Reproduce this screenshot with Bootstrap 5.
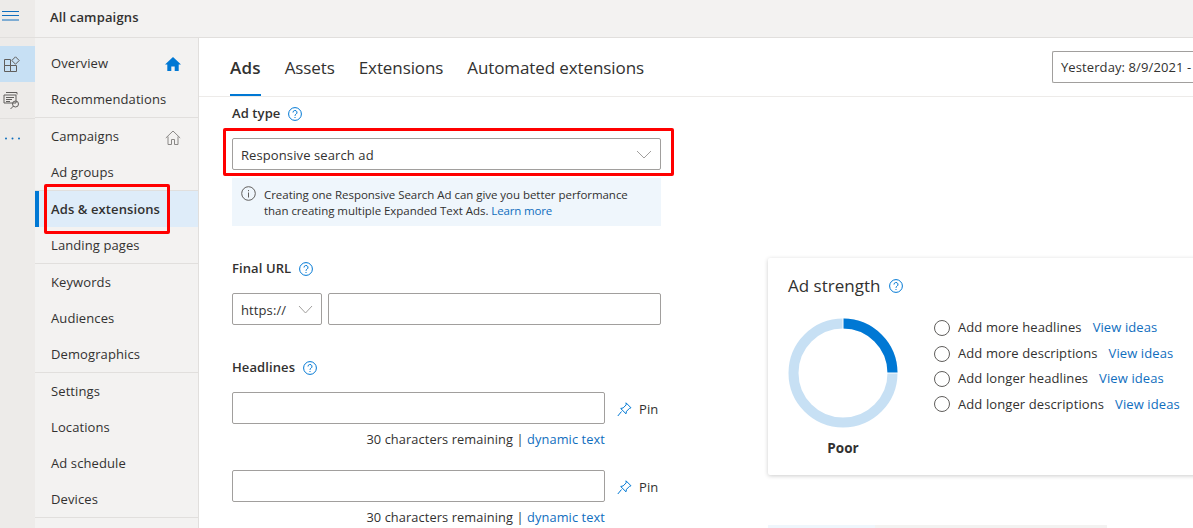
<!DOCTYPE html>
<html lang="en">
<head>
<meta charset="utf-8">
<title>All campaigns</title>
<link href="https://cdn.jsdelivr.net/npm/bootstrap@5.3.0/dist/css/bootstrap.min.css" rel="stylesheet">
<style>
html,body{height:528px;overflow:hidden;background:#fff}
body{position:relative;font-family:"Open Sans","Noto Sans",sans-serif;font-size:13px;color:#323130;letter-spacing:.1px}
a{text-decoration:none;color:#106ebe}
.shell{min-width:0}
.rail{width:35px;height:528px;background:#edebe9;flex:none}
.rail-top{height:38px;border-bottom:1px solid #e1dfdd;padding:11px 0 0 2px;margin-bottom:8px}
.rail-tile{height:36px;display:flex;align-items:center;padding-left:4px}
.rail-tile.on{background:#c7e0f4}
.rail-sep{border-top:1px solid #e1dfdd}
.rail-dots{padding:18px 0 0 4px}
.topstrip{height:38px;background:#f3f2f1;border-bottom:1px solid #e1dfdd;padding:0 15px 2px;display:flex;align-items:center;font-weight:600;font-size:13px;letter-spacing:.15px}
.side{width:164px;flex:none;background:#f3f2f1;border-right:1px solid #e1dfdd;height:490px;padding-top:7px}
.side-group{border-bottom:1px solid #e1dfdd}
.side-item{height:36px;padding:2px 17px 0 16px;display:flex;align-items:center;justify-content:space-between;color:#323130}
.side-item.on{background:#deecf9;box-shadow:inset 4px 0 0 #0078d4;font-weight:600}
.main-pane{height:490px;min-width:0}
.tabs-row{height:59px;border-bottom:1px solid #edebe9;padding-left:31px}
.tab-link{font-size:17px;color:#323130;height:58px;padding-top:2px;display:flex;align-items:center;margin-right:24px;letter-spacing:-.1px}
.tab-link.on{font-weight:600;box-shadow:inset 0 -2px 0 #0078d4;letter-spacing:.2px}
.date-btn{width:141px;height:32px;border:1px solid #a19f9d;border-right:0;border-radius:2px 0 0 2px;padding:2px 0 0 8px;display:flex;align-items:center;white-space:nowrap;margin-top:13px;flex:none}
.form-col{width:429px;margin-left:33px;flex:none}
.field-label{font-weight:600;display:flex;align-items:center;gap:8px;height:20px}
.fake-input{height:32px;border:1px solid #a19f9d;border-radius:2px;background:#fff;display:flex;align-items:center;justify-content:space-between;padding:0 8px}
.fake-input>span{padding-top:3px}
.info-box{background:#eff6fc;height:48px;margin-top:8px;padding:9px 10px 0 9px;display:flex;gap:8px;font-size:11.5px;line-height:16px;letter-spacing:-.04px}
.info-box a{letter-spacing:-.15px}
.info-box svg{margin-top:-1px}
.remain{text-align:right;font-size:12.800px;margin-top:5px;line-height:20px;white-space:nowrap}
.head-row{width:373px}
.pin{color:#323130;position:absolute;left:385px;top:8px;display:flex;gap:7px;align-items:center;white-space:nowrap}
.right-col{margin-left:107px;width:460px;flex:none;padding-top:161px}
.strength{height:217px;box-shadow:0 1px 4px rgba(0,0,0,.2);border-radius:2px;padding:14px 20px;background:#fff}
.strength-title{font-size:17px;display:flex;align-items:center;gap:9px;height:28px;letter-spacing:0}
.tip{display:flex;align-items:center;gap:8px;height:25.4px;white-space:nowrap}
.tip a{margin-left:3px}
.circ{width:16px;height:16px;border:1px solid #605e5c;border-radius:50%;flex:none}
.poor{font-weight:700;font-size:13.500px;text-align:center;width:110px;margin-top:10px}
.strip{height:8px;margin-top:50px;width:339px;background:#f3f2f1}
.strip>div{width:107px;height:8px;background:#eff6fc}
.redbox{position:absolute;border:3px solid #f00;border-radius:2px;pointer-events:none}
.rb-a{left:44px;top:184px;width:126px;height:50px}
.rb-b{left:223px;top:128px;width:451px;height:48px}
</style>
</head>
<body>
<div class="d-flex">
  <div class="rail">
    <div class="rail-top">
      <svg width="18" height="10" viewBox="0 0 18 10" class="d-block"><path d="M0 .5h17M0 4.500h17M0 9h17" stroke="#106ebe" fill="none"/></svg>
    </div>
    <div class="rail-tile on">
      <svg width="16" height="16" viewBox="0 0 16 16" fill="none" stroke="#605e5c"><path d="M.5 3.500h6v6h-6zM.5 9.500h6v6h-6zM6.500 9.500h6v6h-6z"/><path d="M11.500.8l3.700 3.700-3.700 3.700-3.700-3.700z"/></svg>
    </div>
    <div class="rail-tile">
      <svg width="17" height="17" viewBox="0 0 17 17" fill="none" stroke="#605e5c" style="margin-left:-1px"><path d="M3 .5h11v2M1 3h12v8H1zM3 5.500h8M3 7.500h6M3 9.500h4"/><circle cx="12.500" cy="12" r="3"/><path d="M10.500 14l-3 3"/></svg>
    </div>
    <div class="rail-sep"></div>
    <div class="rail-dots">
      <svg width="17" height="3" viewBox="0 0 17 3" fill="#106ebe" class="d-block"><circle cx="2" cy="1.500" r="1"/><circle cx="8.500" cy="1.500" r="1"/><circle cx="15" cy="1.500" r="1"/></svg>
    </div>
  </div>
  <div class="flex-grow-1 shell">
    <div class="topstrip">All campaigns</div>
    <div class="d-flex">
      <nav class="side">
        <div class="side-group">
          <a class="side-item" href="#">Overview
            <svg width="16" height="14" viewBox="0 0 16 14"><path d="M8 0L0 7.500h2.300V14h4V9.500h3.400V14h4V7.500H16z" fill="#0078d4"/></svg></a>
          <a class="side-item" href="#">Recommendations</a>
        </div>
        <div class="side-group">
          <a class="side-item" href="#">Campaigns
            <svg width="16" height="15" viewBox="0 0 16 15" fill="none" stroke="#8a8886"><path d="M.8 8L8 1l7.200 7M3 6.500v8h3.500v-5h3v5H13v-8"/></svg></a>
          <a class="side-item" href="#">Ad groups</a>
        </div>
        <div class="side-group">
          <a class="side-item on" href="#">Ads &amp; extensions</a>
          <a class="side-item" href="#">Landing pages</a>
        </div>
        <div class="side-group">
          <a class="side-item" href="#">Keywords</a>
          <a class="side-item" href="#">Audiences</a>
          <a class="side-item" href="#">Demographics</a>
        </div>
        <div class="side-group">
          <a class="side-item" href="#">Settings</a>
          <a class="side-item" href="#">Locations</a>
          <a class="side-item" href="#">Ad schedule</a>
          <a class="side-item" href="#">Devices</a>
        </div>
      </nav>
      <main class="flex-grow-1 overflow-hidden main-pane">
        <div class="tabs-row d-flex justify-content-between">
          <div class="d-flex">
            <a class="tab-link on" href="#">Ads</a>
            <a class="tab-link" href="#">Assets</a>
            <a class="tab-link" href="#">Extensions</a>
            <a class="tab-link" href="#">Automated extensions</a>
          </div>
          <div class="date-btn">Yesterday: 8/9/2021 -</div>
        </div>
        <div class="d-flex">
          <div class="form-col">
            <div class="field-label" style="height:21px;margin-top:6px">Ad type
              <svg width="14" height="14" viewBox="0 0 14 14" fill="none" stroke="#0078d4"><circle cx="7" cy="7" r="6.400"/><path d="M5 5.500a2 2 0 1 1 3 1.700c-.7.400-1 .8-1 1.600M7 10v1"/></svg></div>
            <div class="fake-input" style="margin-top:14px">
              <span>Responsive search ad</span>
              <svg width="16" height="9" viewBox="0 0 16 9" fill="none" stroke="#a19f9d"><path d="M1 1l7 7 7-7"/></svg>
            </div>
            <div class="info-box">
              <svg width="15" height="15" viewBox="0 0 15 15" fill="none" stroke="#605e5c" class="flex-shrink-0"><circle cx="7.500" cy="7.500" r="6.800"/><path d="M7.500 6.500v5M7.500 4v1.200"/></svg>
              <div class="text-nowrap">Creating one Responsive Search Ad can give you better performance<br>than creating multiple Expanded Text Ads. <a href="#">Learn more</a></div>
            </div>
            <div class="field-label" style="margin-top:33px">Final URL
              <svg width="14" height="14" viewBox="0 0 14 14" fill="none" stroke="#0078d4"><circle cx="7" cy="7" r="6.400"/><path d="M5 5.500a2 2 0 1 1 3 1.700c-.7.400-1 .8-1 1.600M7 10v1"/></svg></div>
            <div class="d-flex justify-content-between" style="margin-top:14px">
              <div class="fake-input" style="width:90px"><span>https://</span>
                <svg width="15" height="9" viewBox="0 0 15 9" fill="none" stroke="#a19f9d"><path d="M1 1l6.500 7L14 1"/></svg></div>
              <div class="fake-input" style="width:333px"></div>
            </div>
            <div class="field-label" style="margin-top:33px">Headlines
              <svg width="14" height="14" viewBox="0 0 14 14" fill="none" stroke="#0078d4"><circle cx="7" cy="7" r="6.400"/><path d="M5 5.500a2 2 0 1 1 3 1.700c-.7.400-1 .8-1 1.600M7 10v1"/></svg></div>
            <div class="head-row position-relative" style="margin-top:14px">
              <div class="fake-input"></div>
              <div class="pin"><svg width="15" height="15" viewBox="0 0 15 15" fill="none" stroke="#0078d4"><path d="M9 .8l5 5-1.500.5-3 3-.5 2.500-5.300-5.300 2.500-.6 3-3zM4.500 9.500L.8 14"/></svg>Pin</div>
              <div class="remain">30 characters remaining | <a href="#">dynamic text</a></div>
            </div>
            <div class="head-row position-relative" style="margin-top:21px">
              <div class="fake-input"></div>
              <div class="pin"><svg width="15" height="15" viewBox="0 0 15 15" fill="none" stroke="#0078d4"><path d="M9 .8l5 5-1.500.5-3 3-.5 2.500-5.300-5.300 2.500-.6 3-3zM4.500 9.500L.8 14"/></svg>Pin</div>
              <div class="remain">30 characters remaining | <a href="#">dynamic text</a></div>
            </div>
          </div>
          <div class="right-col">
            <section class="strength">
              <div class="strength-title">Ad strength
                <svg width="14" height="14" viewBox="0 0 14 14" fill="none" stroke="#0078d4"><circle cx="7" cy="7" r="6.400"/><path d="M5 5.500a2 2 0 1 1 3 1.700c-.7.400-1 .8-1 1.600M7 10v1"/></svg></div>
              <div class="d-flex" style="margin-top:18px">
                <div style="width:110px">
                  <svg width="110" height="110" viewBox="0 0 110 110" fill="none" stroke-width="10" class="d-block">
                    <circle cx="55" cy="55" r="49.500" stroke="#c7e0f4"/>
                    <path d="M55 5.500A49.500 49.500 0 0 1 104.500 55" stroke="#0078d4"/>
                    <path d="M55 0v11M99 55h11" stroke="#fff" stroke-width="1"/>
                  </svg>
                  <div class="poor">Poor</div>
                </div>
                <div style="margin-left:36px;margin-top:-2.500px">
                  <div class="tip"><span class="circ"></span>Add more headlines <a href="#">View ideas</a></div>
                  <div class="tip"><span class="circ"></span>Add more descriptions <a href="#">View ideas</a></div>
                  <div class="tip"><span class="circ"></span>Add longer headlines <a href="#">View ideas</a></div>
                  <div class="tip"><span class="circ"></span>Add longer descriptions <a href="#">View ideas</a></div>
                </div>
              </div>
            </section>
            <div class="strip"><div></div></div>
          </div>
        </div>
      </main>
    </div>
  </div>
</div>
<div class="redbox rb-a"></div>
<div class="redbox rb-b"></div>
</body>
</html>
